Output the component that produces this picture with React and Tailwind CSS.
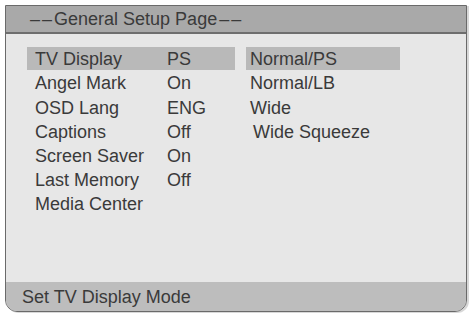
export default function App() {
  const rows = [
    { label: 'TV Display', value: 'PS', h: 'h-[23px]', active: true },
    { label: 'Angel Mark', value: 'On', h: 'h-[25px]' },
    { label: 'OSD Lang', value: 'ENG', h: 'h-[25px]' },
    { label: 'Captions', value: 'Off', h: 'h-[24px]' },
    { label: 'Screen Saver', value: 'On', h: 'h-[24px]' },
    { label: 'Last Memory', value: 'Off', h: 'h-[23px]' },
    { label: 'Media Center', value: '', h: 'h-[25px]' },
  ];

  const options = [
    { label: 'Normal/PS', h: 'h-[23px]', active: true },
    { label: 'Normal/LB', h: 'h-[25px]' },
    { label: 'Wide', h: 'h-[25px]' },
    { label: 'Wide Squeeze', h: 'h-[24px]', indent: true },
  ];

  return (
    <div className="w-[474px] h-[314px] bg-white pl-[5px] pt-[5px] font-['Liberation_Sans',Arial,sans-serif] text-[18px] text-[#3a3a3a]">
      <div className="w-[462px] h-[307px] flex flex-col border border-[#6a6a6a] rounded-b-[12px] overflow-hidden bg-[#e7e7e7] shadow-[2px_1px_0_#d8d8d8]">
        {/* Header */}
        <div className="h-[28px] shrink-0 bg-[#a9a9a9] border-b-2 border-[#6e6e6e] flex items-center pl-[24px] leading-none">
          <span className="tracking-[2px]">––</span>
          <span>General Setup Page</span>
          <span className="tracking-[2px] pl-[2px]">––</span>
        </div>

        {/* Body */}
        <div className="flex-1 flex pl-[21px] pt-[13px]">
          <div className="w-[208px] flex flex-col">
            {rows.map((r) => (
              <div
                key={r.label}
                className={`${r.h} flex items-center pl-[8px] leading-none ${r.active ? 'bg-[#b9b9b9]' : ''}`}
              >
                <span className="w-[132px]">{r.label}</span>
                <span>{r.value}</span>
              </div>
            ))}
          </div>
          <div className="w-[154px] ml-[11px] flex flex-col">
            {options.map((o) => (
              <div
                key={o.label}
                className={`${o.h} flex items-center leading-none ${o.indent ? 'pl-[7px]' : 'pl-[4px]'} ${o.active ? 'bg-[#b9b9b9]' : ''}`}
              >
                {o.label}
              </div>
            ))}
          </div>
        </div>

        {/* Footer */}
        <div className="h-[29px] shrink-0 bg-[#bdbdbd] flex items-center pl-[16px] leading-none">
          Set TV Display Mode
        </div>
      </div>
    </div>
  );
}
